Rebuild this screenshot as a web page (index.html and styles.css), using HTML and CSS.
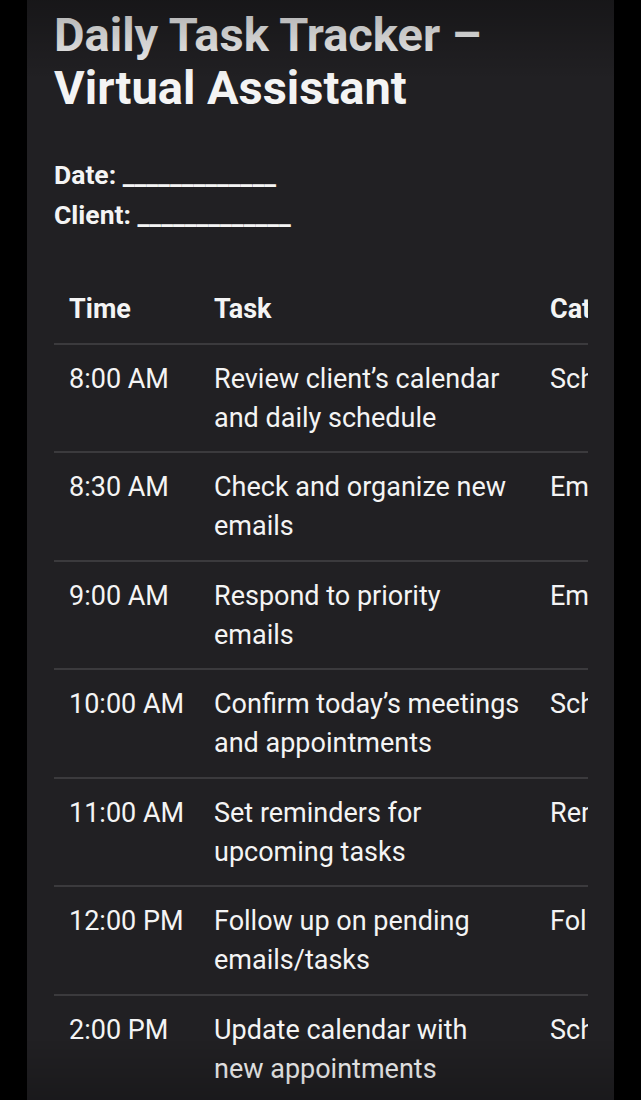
FILE: index.html
```html
<!DOCTYPE html>
<html lang="en">
<head>
	<meta charset="UTF-8">
	<title>Daily Task Tracker</title>
	<link rel="stylesheet" href="styles.css">
</head>
<body>
	<div class="page">
		<div class="shade-top"></div>
		<h1 class="title">Daily Task Tracker – Virtual Assistant</h1>
		<p class="meta"><b>Date: _____________</b><br><b>Client: _____________</b></p>
		<div class="table-wrap">
			<table class="tasks">
				<colgroup>
					<col class="c-time">
					<col class="c-task">
					<col class="c-cat">
					<col class="c-status">
				</colgroup>
				<thead>
					<tr><th>Time</th><th>Task</th><th>Category</th><th>Status</th></tr>
				</thead>
				<tbody>
					<tr><td>8:00 AM</td><td>Review client’s calendar and daily schedule</td><td>Scheduling</td><td>☐</td></tr>
					<tr><td>8:30 AM</td><td>Check and organize new emails</td><td>Email</td><td>☐</td></tr>
					<tr><td>9:00 AM</td><td>Respond to priority emails</td><td>Email</td><td>☐</td></tr>
					<tr><td>10:00 AM</td><td>Confirm today’s meetings and appointments</td><td>Scheduling</td><td>☐</td></tr>
					<tr><td>11:00 AM</td><td>Set reminders for upcoming tasks</td><td>Reminders</td><td>☐</td></tr>
					<tr><td>12:00 PM</td><td>Follow up on pending emails/tasks</td><td>Follow-up</td><td>☐</td></tr>
					<tr><td>2:00 PM</td><td>Update calendar with new appointments</td><td>Scheduling</td><td>☐</td></tr>
					<tr><td>3:00 PM</td><td>Prepare end-of-day summary report</td><td>Reporting</td><td>☐</td></tr>
					<tr><td>4:30 PM</td><td>Plan tasks for tomorrow</td><td>Planning</td><td>☐</td></tr>
				</tbody>
			</table>
		</div>
		<div class="shade-bottom"></div>
	</div>
</body>
</html>
```

FILE: styles.css
```css
*{
	margin: 0;
	padding: 0;
	box-sizing: border-box;
}
body{
	background-color: #000;
	font-family: Roboto, "Liberation Sans", sans-serif;
	color: #f4f4f4;
	overflow: hidden;
}
.page{
	position: relative;
	margin: 0 27px;
	padding: 8px 26px 0 27px;
	min-height: 1100px;
	background-color: #212023;
}
.title{
	font-size: 47px;
	font-weight: 700;
	line-height: 53px;
	width: 450px;
	margin-bottom: 41px;
}
.meta{
	font-size: 26.5px;
	line-height: 40px;
}
.table-wrap{
	margin-top: 40px;
	overflow-x: auto;
}
.tasks{
	table-layout: fixed;
	width: 980px;
	border-collapse: collapse;
	font-size: 27px;
	line-height: 39px;
	text-align: left;
}
.c-time{ width: 145px; }
.c-task{ width: 336px; }
.c-cat{ width: 250px; }
.c-status{ width: 249px; }
.tasks th,
.tasks td{
	padding: 15px 15px 13.5px;
	vertical-align: top;
	border-bottom: 2px solid #3b3a3d;
}
.tasks td:first-child{
	white-space: nowrap;
}
.tasks th{
	font-weight: 700;
}
.shade-top{
	position: absolute;
	left: 0;
	top: 0;
	width: 100%;
	height: 80px;
	background: linear-gradient(rgba(0,0,0,0.3), rgba(0,0,0,0));
	pointer-events: none;
	z-index: 2;
}
.shade-bottom{
	position: fixed;
	left: 27px;
	right: 27px;
	bottom: 0;
	height: 60px;
	background: linear-gradient(rgba(0,0,0,0), rgba(0,0,0,0.2));
	pointer-events: none;
}
```
